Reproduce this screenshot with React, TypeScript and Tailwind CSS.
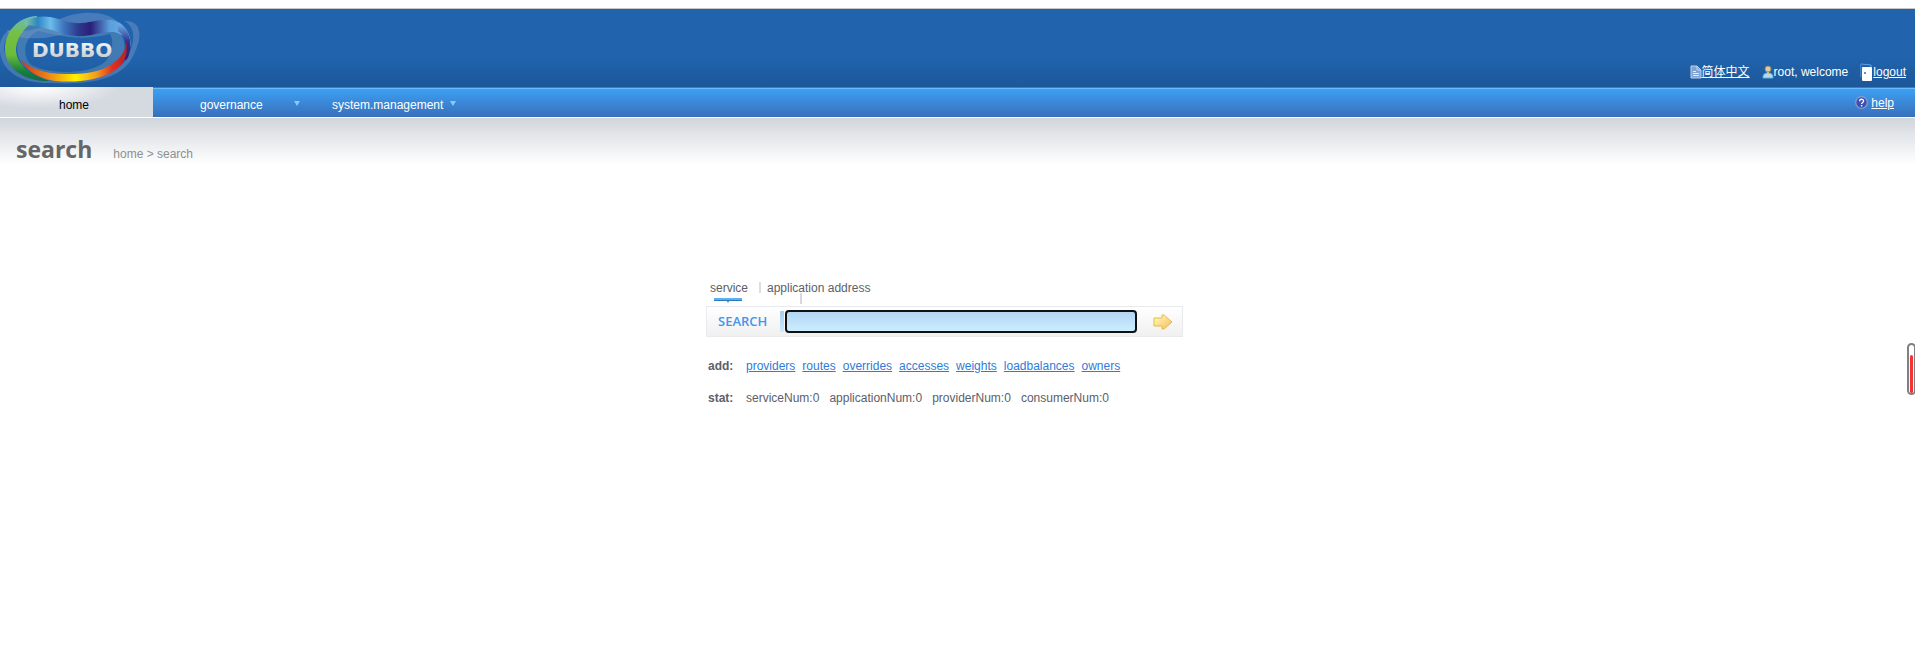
const addLinks = ["providers", "routes", "overrides", "accesses", "weights", "loadbalances", "owners"];

const stats = [
  { name: "serviceNum", value: 0 },
  { name: "applicationNum", value: 0 },
  { name: "providerNum", value: 0 },
  { name: "consumerNum", value: 0 },
];

function Logo() {
  return (
    <svg width="142" height="78" viewBox="0 9 142 78" role="img" aria-label="DUBBO">
      <defs>
        <linearGradient id="ribbonTop" x1="0" x2="1" y1="0" y2="0">
          <stop offset="0" stopColor="#7fc3a0" />
          <stop offset="0.12" stopColor="#2f86c4" />
          <stop offset="0.24" stopColor="#6cbdec" />
          <stop offset="0.36" stopColor="#3f78c0" />
          <stop offset="0.5" stopColor="#2d3a90" />
          <stop offset="0.62" stopColor="#2b1f78" />
          <stop offset="0.8" stopColor="#5a9fdc" />
          <stop offset="1" stopColor="#6cb4ea" />
        </linearGradient>
        <linearGradient id="ribbonLeft" x1="0" x2="0" y1="0" y2="1">
          <stop offset="0" stopColor="#6bb8c4" />
          <stop offset="0.28" stopColor="#76c043" />
          <stop offset="0.6" stopColor="#6cbb3a" />
          <stop offset="0.85" stopColor="#178040" />
          <stop offset="1" stopColor="#0e6a48" />
        </linearGradient>
        <linearGradient id="ribbonBottom" x1="0" x2="1" y1="0" y2="0">
          <stop offset="0" stopColor="#c7361e" />
          <stop offset="0.25" stopColor="#ee7f15" />
          <stop offset="0.52" stopColor="#fff000" />
          <stop offset="0.72" stopColor="#f29a1c" />
          <stop offset="0.86" stopColor="#dd3420" />
          <stop offset="1" stopColor="#b81f28" />
        </linearGradient>
        <linearGradient id="ribbonRight" x1="0" x2="0" y1="0" y2="1">
          <stop offset="0" stopColor="#6cb4ea" />
          <stop offset="0.5" stopColor="#33318c" />
          <stop offset="1" stopColor="#2b1f68" />
        </linearGradient>
        <linearGradient id="letters" x1="0" x2="0" y1="0" y2="1">
          <stop offset="0" stopColor="#ffffff" />
          <stop offset="1" stopColor="#bfc3c8" />
        </linearGradient>
      </defs>
      <g fill="#9fb4d8" fillOpacity="0.3" fillRule="evenodd">
        <path d="M24 28C8 26-2 36 0 52C3 74 24 84 52 83C88 85 120 80 132 58C142 40 144 20 124 21C138 28 134 46 126 60C114 76 86 79 52 78C26 78 8 68 4 50C3 38 12 32 24 30Z" />
        <path d="M6 30C24 34 44 28 58 20C78 10 106 10 118 22C106 20 92 22 80 26C60 40 30 40 12 36Z" />
      </g>
      <path
        fill="#7fa6c4"
        fillOpacity="0.35"
        fillRule="evenodd"
        d="M35 22C60 30 78 38 112 29C128 32 128 58 116 68C92 80 38 80 22 64C12 47 18 30 35 22ZM38 31C24 37 22 54 30 64C49 76 93 74 106 61C113 52 114 40 110 34C78 42 58 35 38 31Z"
      />
      <path
        fill="url(#ribbonLeft)"
        d="M37 16C17 17 5 32 5 50C6 69 25 82 50 81C32 76 17 65 16 51C16 37 26 25 38 20Z"
      />
      <path
        fill="url(#ribbonTop)"
        d="M25 21C42 13 54 17 68 22C84 26 98 18 112 20C124 22 131 33 131 47C129 42 124 34 114 32C98 31 88 39 68 35C54 31 42 26 25 25Z"
      />
      <path fill="url(#ribbonRight)" d="M118 23C129 28 133 42 129 54C128 60 124 61 124 60C128 50 126 36 118 31Z" />
      <path
        fill="url(#ribbonBottom)"
        d="M20 59C30 69 47 75 70 74C94 74 109 69 120 57C126 50 126 44 126 41C129 55 124 66 112 72C99 80 76 83 55 81C38 78 26 71 20 59Z"
      />
      <text x="32" y="57" fill="url(#letters)" className="font-['DejaVu_Sans'] text-[20px] font-bold">
        DUBBO
      </text>
    </svg>
  );
}

function PageIcon() {
  return (
    <svg width="12" height="14" viewBox="0 0 12 14" aria-hidden="true">
      <path d="M1 1h6l4 4v8H1z" fill="#7fa2d2" stroke="#c0d2ec" />
      <path d="M7 1v4h4" fill="none" stroke="#c0d2ec" />
      <path d="M3 6.5h3M3 8.5h6M3 10.5h6" fill="none" stroke="#e4edf8" />
    </svg>
  );
}

function UserIcon() {
  return (
    <svg width="12" height="14" viewBox="0 0 12 14" aria-hidden="true">
      <path d="M1 13c0-4 2-5 5-5s5 1 5 5z" fill="#a8def5" stroke="#6cb0dc" />
      <path d="M5 6h2v3l-1 2-1-2z" fill="#e8c88c" />
      <circle cx="6" cy="4" r="3" fill="#d9cda4" stroke="#8f8a70" />
    </svg>
  );
}

function DoorIcon() {
  return (
    <svg width="13" height="18" viewBox="0 0 13 18" aria-hidden="true">
      <path d="M1 14V1l10 1v2" fill="none" stroke="#5fa3e6" />
      <path d="M1 1l3 3v12l-3-2z" fill="#2a6cb8" />
      <rect x="2" y="4" width="10" height="14" rx="1" fill="#ffffff" />
      <circle cx="5" cy="10" r="1" fill="#2a6cb8" />
    </svg>
  );
}

function HelpIcon() {
  return (
    <svg width="13" height="13" viewBox="0 0 13 13" aria-hidden="true">
      <circle cx="6.5" cy="6.5" r="5.8" fill="#3a50b8" stroke="#8d9cc4" strokeWidth="1.3" />
      <path d="M4.6 5.2c0-2.6 4-2.5 4-.2 0 1.5-2 1.4-2 3" fill="none" stroke="#ffffff" strokeWidth="1.3" />
      <rect x="5.9" y="9" width="1.4" height="1.4" fill="#ffffff" />
    </svg>
  );
}

function Caret() {
  return (
    <svg width="6" height="5" viewBox="0 0 6 5" className="-mt-[3px]" aria-hidden="true">
      <path d="M0 0h6L3 5z" fill="#8cc8fa" />
    </svg>
  );
}

export default function App() {
  return (
    <div className="relative overflow-x-hidden bg-white pt-2 font-['Liberation_Sans','Noto_Sans_CJK_SC',sans-serif] text-xs text-[#5c606a]">
      <header className="flex h-[79px] items-start justify-between border-t border-[#c8c8c8] bg-linear-to-b from-[#2164ad] from-60% to-[#1c579a]">
        <Logo />
        <div className="mt-[54px] mr-[9px] flex h-[18px] items-center text-white">
          <PageIcon />
          <a href="#" className="mr-3 underline">
            简体中文
          </a>
          <UserIcon />
          <span className="mr-3">root, welcome</span>
          <DoorIcon />
          <a href="#" className="underline">
            logout
          </a>
        </div>
      </header>

      <nav className="flex h-[31px] border-b border-white text-white">
        <a
          href="#"
          className="flex w-[153px] items-center bg-radial-[at_25%_0%] from-white to-[#d5dae1] to-50% pt-[6px] pl-[59px] text-black"
        >
          home
        </a>
        <div className="flex flex-1 items-center border-t border-[#2f80cc] bg-linear-to-b from-[#3ba2f6] to-[#386fba] pr-[21px] shadow-[inset_0_1px_0_#6cbaf8]">
          <button type="button" className="flex items-center pt-1 pl-[47px]">
            <span className="w-[94px] text-left">governance</span>
            <Caret />
          </button>
          <button type="button" className="flex items-center gap-[7px] pt-1 pl-8">
            system.management
            <Caret />
          </button>
          <a href="#" className="ml-auto flex items-center gap-[3px]">
            <HelpIcon />
            <span className="underline">help</span>
          </a>
        </div>
      </nav>

      <div className="flex h-[46px] items-baseline gap-[21px] bg-linear-to-b from-[#d1d6dc] to-white pt-[13px] pl-4">
        <h1 className="font-['Open_Sans',sans-serif] text-[23px] leading-9 font-bold text-[#666666]">search</h1>
        <span className="text-[#8f8f8f]">home &gt; search</span>
      </div>

      <main className="mt-[116px] pr-[26px]">
        <div className="mx-auto w-[477px]">
          <div className="flex h-[26px] items-start pl-1">
            <button type="button" className="flex w-[49px] flex-col items-start">
              service
              <svg width="28" height="6" viewBox="0 0 28 6" className="mt-px ml-1" aria-hidden="true">
                <path d="M0 1h28v2H0z" fill="#5ab0f5" />
                <path d="M0 3h28v1H15l-1 2-1-2H0z" fill="#2f78b8" />
              </svg>
            </button>
            <span className="mt-[2px] h-[11px] w-[2px] bg-[#dcdce2]" />
            <button type="button" className="relative ml-[6px]">
              application address
              <span className="absolute top-[13px] left-[33px] h-[11px] w-[2px] bg-[#d8d8e2]" />
            </button>
          </div>

          <form className="flex h-[31px] items-center border border-[#e8eaee] bg-linear-to-b from-white to-[#f0f0f0]">
            <label
              htmlFor="keyword"
              className="w-[67px] pl-[11px] font-['Open_Sans',sans-serif] text-[13px] font-semibold text-[#4496ec]"
            >
              SEARCH
            </label>
            <span className="mr-px ml-[6px] h-[21px] w-1 bg-linear-to-b from-[#a9cdee] to-[#cbebfd]" />
            <input
              id="keyword"
              type="text"
              className="h-[23px] w-[352px] rounded-[4px] border-2 border-[#101010] bg-linear-to-b from-[#b2d5f4] to-[#cbeefe] outline-none"
            />
            <button type="submit" aria-label="Search" className="ml-4">
              <svg width="20" height="16" viewBox="0 0 20 16" aria-hidden="true">
                <defs>
                  <linearGradient id="arrow" x1="0" x2="1" y1="0" y2="1">
                    <stop offset="0.2" stopColor="#fdf3a0" />
                    <stop offset="1" stopColor="#fbb66a" />
                  </linearGradient>
                </defs>
                <path
                  d="M1 4h8V1h2l8 7-8 7H9v-3H1z"
                  fill="url(#arrow)"
                  stroke="#e2bd4c"
                  strokeLinejoin="round"
                />
              </svg>
            </button>
          </form>

          <dl className="mt-[21px] grid grid-cols-[38px_1fr] gap-y-4 pl-[2px]">
            <dt className="font-bold">add:</dt>
            <dd className="flex gap-[7px]">
              {addLinks.map((name) => (
                <a key={name} href="#" className="text-[#2f7bd8] underline">
                  {name}
                </a>
              ))}
            </dd>
            <dt className="font-bold">stat:</dt>
            <dd className="flex gap-[10px]">
              {stats.map((stat) => (
                <span key={stat.name}>
                  {stat.name}:{stat.value}
                </span>
              ))}
            </dd>
          </dl>
        </div>
      </main>

      {/* load gauge docked to the window's right edge */}
      <div className="fixed top-[343px] -right-px flex h-[52px] w-[9px] items-end rounded-[5px] border-2 border-[#808080] bg-white px-px">
        <div className="h-[38px] w-[3px] rounded-[2px] bg-[#f53337]" />
      </div>
    </div>
  );
}
